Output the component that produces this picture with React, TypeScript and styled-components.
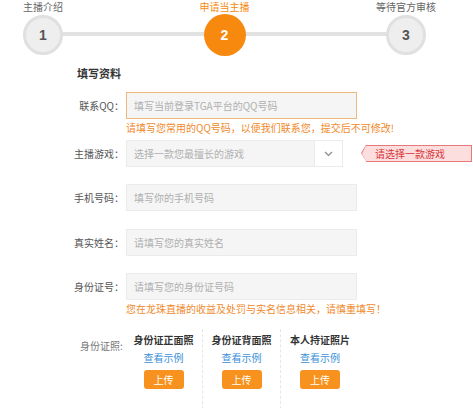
import React from "react";
import styled, { createGlobalStyle } from "styled-components";

const GlobalStyle = createGlobalStyle`
  html, body {
    margin: 0;
    padding: 0;
    background: #fff;
  }
  body {
    font-family: "Noto Sans CJK SC", "Liberation Sans", sans-serif;
    color: #333;
  }
`;

const orange = "#f7890f";

export default function App() {
  const steps = [
    { num: 1, title: "主播介绍" },
    { num: 2, title: "申请当主播", active: true },
    { num: 3, title: "等待官方审核" },
  ];

  const photos = ["身份证正面照", "身份证背面照", "本人持证照片"];

  return (
    <Page>
      <GlobalStyle />
      <Stepper>
        {steps.map((s, i) => (
          <React.Fragment key={s.num}>
            {i > 0 && <Connector />}
            <Step>
              <StepTitle $active={s.active}>{s.title}</StepTitle>
              <Circle $active={s.active}>{s.num}</Circle>
            </Step>
          </React.Fragment>
        ))}
      </Stepper>

      <Form>
        <SectionTitle>填写资料</SectionTitle>

        <Field>
          <Label>联系QQ：</Label>
          <Input $highlight>填写当前登录TGA平台的QQ号码</Input>
        </Field>
        <Hint>请填写您常用的QQ号码，以便我们联系您，提交后不可修改!</Hint>

        <Field $gap={4}>
          <Label>主播游戏：</Label>
          <Select>
            <SelectText>选择一款您最擅长的游戏</SelectText>
            <SelectArrow>
              <svg width="9" height="6" viewBox="0 0 9 6">
                <path d="M1 1l3.5 3.5L8 1" fill="none" stroke="#888" strokeWidth="1.2" />
              </svg>
            </SelectArrow>
          </Select>
          <ErrorTip>请选择一款游戏</ErrorTip>
        </Field>

        <Field $gap={17}>
          <Label>手机号码：</Label>
          <Input>填写你的手机号码</Input>
        </Field>

        <Field $gap={18}>
          <Label>真实姓名：</Label>
          <Input>请填写您的真实姓名</Input>
        </Field>

        <Field $gap={17}>
          <Label>身份证号：</Label>
          <Input>请填写您的身份证号码</Input>
        </Field>
        <Hint>您在龙珠直播的收益及处罚与实名信息相关，请慎重填写！</Hint>

        <PhotoRow>
          <PhotoLabel>身份证照:</PhotoLabel>
          <PhotoGrid>
            {photos.map((p) => (
              <PhotoCol key={p}>
                <PhotoTitle>{p}</PhotoTitle>
                <ExampleLink>查看示例</ExampleLink>
                <UploadButton>上传</UploadButton>
              </PhotoCol>
            ))}
          </PhotoGrid>
        </PhotoRow>
      </Form>
    </Page>
  );
}

const Page = styled.div`
  width: 473px;
  height: 408px;
  overflow: hidden;
  background: #fff;
`;

const Stepper = styled.div`
  display: flex;
  align-items: flex-end;
  padding: 0 47px 0 23px;
`;

const Step = styled.div`
  display: flex;
  flex-direction: column;
  align-items: center;
  position: relative;
  z-index: 1;
`;

const StepTitle = styled.div<{ $active?: boolean }>`
  font-size: 10px;
  line-height: 11px;
  margin-top: 1px;
  margin-bottom: 3px;
  white-space: nowrap;
  color: ${(p) => (p.$active ? orange : "#666")};
  width: 40px;
  display: flex;
  justify-content: center;
`;

const Circle = styled.div<{ $active?: boolean }>`
  box-sizing: border-box;
  width: ${(p) => (p.$active ? 42 : 40)}px;
  height: ${(p) => (p.$active ? 42 : 40)}px;
  margin: ${(p) => (p.$active ? "-1px 0" : "0")};
  border-radius: 50%;
  display: flex;
  align-items: center;
  justify-content: center;
  font-family: "Liberation Sans", sans-serif;
  font-weight: bold;
  font-size: 14px;
  color: ${(p) => (p.$active ? "#fff" : "#555")};
  background: ${(p) => (p.$active ? orange : "#eeeeee")};
  border: ${(p) => (p.$active ? "none" : "3px solid #e0e0e0")};
`;

const Connector = styled.div`
  flex: 1;
  height: 4px;
  margin: 0 -4px 19px;
  background: #e2e2e2;
`;

const Form = styled.div`
  display: flex;
  flex-direction: column;
  margin-top: 11px;
`;

const SectionTitle = styled.div`
  font-size: 11px;
  line-height: 14px;
  font-weight: bold;
  color: #333;
  padding-left: 77px;
  margin-bottom: 12px;
`;

const Field = styled.div<{ $gap?: number }>`
  display: flex;
  align-items: center;
  margin-top: ${(p) => p.$gap ?? 0}px;
`;

const Label = styled.div`
  width: 124px;
  text-align: right;
  font-size: 10px;
  color: #555;
  margin-right: 2px;
  flex-shrink: 0;
`;

const Input = styled.div<{ $highlight?: boolean }>`
  box-sizing: border-box;
  width: 231px;
  height: 27px;
  padding-left: 7px;
  display: flex;
  align-items: center;
  font-size: 10px;
  color: #b0b0b0;
  background: #f5f5f5;
  border: 1px solid ${(p) => (p.$highlight ? "#f2b77a" : "#ebebeb")};
`;

const Hint = styled.div`
  padding-left: 126px;
  font-size: 10px;
  line-height: 16px;
  color: #f08a2c;
  margin-top: 1px;
  white-space: nowrap;
`;

const Select = styled.div`
  box-sizing: border-box;
  width: 217px;
  height: 27px;
  display: flex;
  background: #f5f5f5;
  border: 1px solid #ebebeb;
`;

const SelectText = styled.div`
  flex: 1;
  display: flex;
  align-items: center;
  padding-left: 7px;
  font-size: 10px;
  color: #b0b0b0;
`;

const SelectArrow = styled.div`
  width: 27px;
  background: #fff;
  border-left: 1px solid #ebebeb;
  display: flex;
  align-items: center;
  justify-content: center;
`;

const ErrorTip = styled.div`
  position: relative;
  box-sizing: border-box;
  margin-left: 23px;
  width: 106px;
  height: 17px;
  padding-left: 9px;
  display: flex;
  align-items: center;
  font-size: 10px;
  color: #d8353a;
  background: #fddede;
  border: 1px solid #e67a7a;
  border-left: none;

  &::before {
    content: "";
    position: absolute;
    left: -5px;
    top: -1px;
    width: 0;
    height: 0;
    border-top: 8.5px solid transparent;
    border-bottom: 8.5px solid transparent;
    border-right: 5px solid #e67a7a;
  }

  &::after {
    content: "";
    position: absolute;
    left: -4px;
    top: 0;
    width: 4px;
    height: 15px;
    background: #fddede;
    clip-path: polygon(100% 0, 100% 100%, 0 50%);
  }
`;

const PhotoRow = styled.div`
  display: flex;
  margin-top: 12px;
`;

const PhotoLabel = styled.div`
  width: 125px;
  padding-left: 80px;
  box-sizing: border-box;
  white-space: nowrap;
  font-size: 10px;
  color: #777;
  padding-top: 9px;
`;

const PhotoGrid = styled.div`
  display: grid;
  grid-template-columns: 78px 78px 78px;
`;

const PhotoCol = styled.div`
  display: flex;
  flex-direction: column;
  align-items: center;
  height: 80px;
  padding-top: 4px;
  box-sizing: border-box;
  border-right: 1px dashed #e6e6e6;

  &:last-child {
    border-right: none;
  }
`;

const PhotoTitle = styled.div`
  font-size: 10px;
  line-height: 14px;
  font-weight: bold;
  color: #333;
`;

const ExampleLink = styled.div`
  font-size: 10px;
  line-height: 14px;
  margin-top: 4px;
  color: #3b8fd9;
`;

const UploadButton = styled.div`
  margin-top: 5px;
  width: 40px;
  height: 19px;
  border-radius: 3px;
  background: #f7921e;
  color: #fff;
  font-size: 10px;
  display: flex;
  align-items: center;
  justify-content: center;
`;
